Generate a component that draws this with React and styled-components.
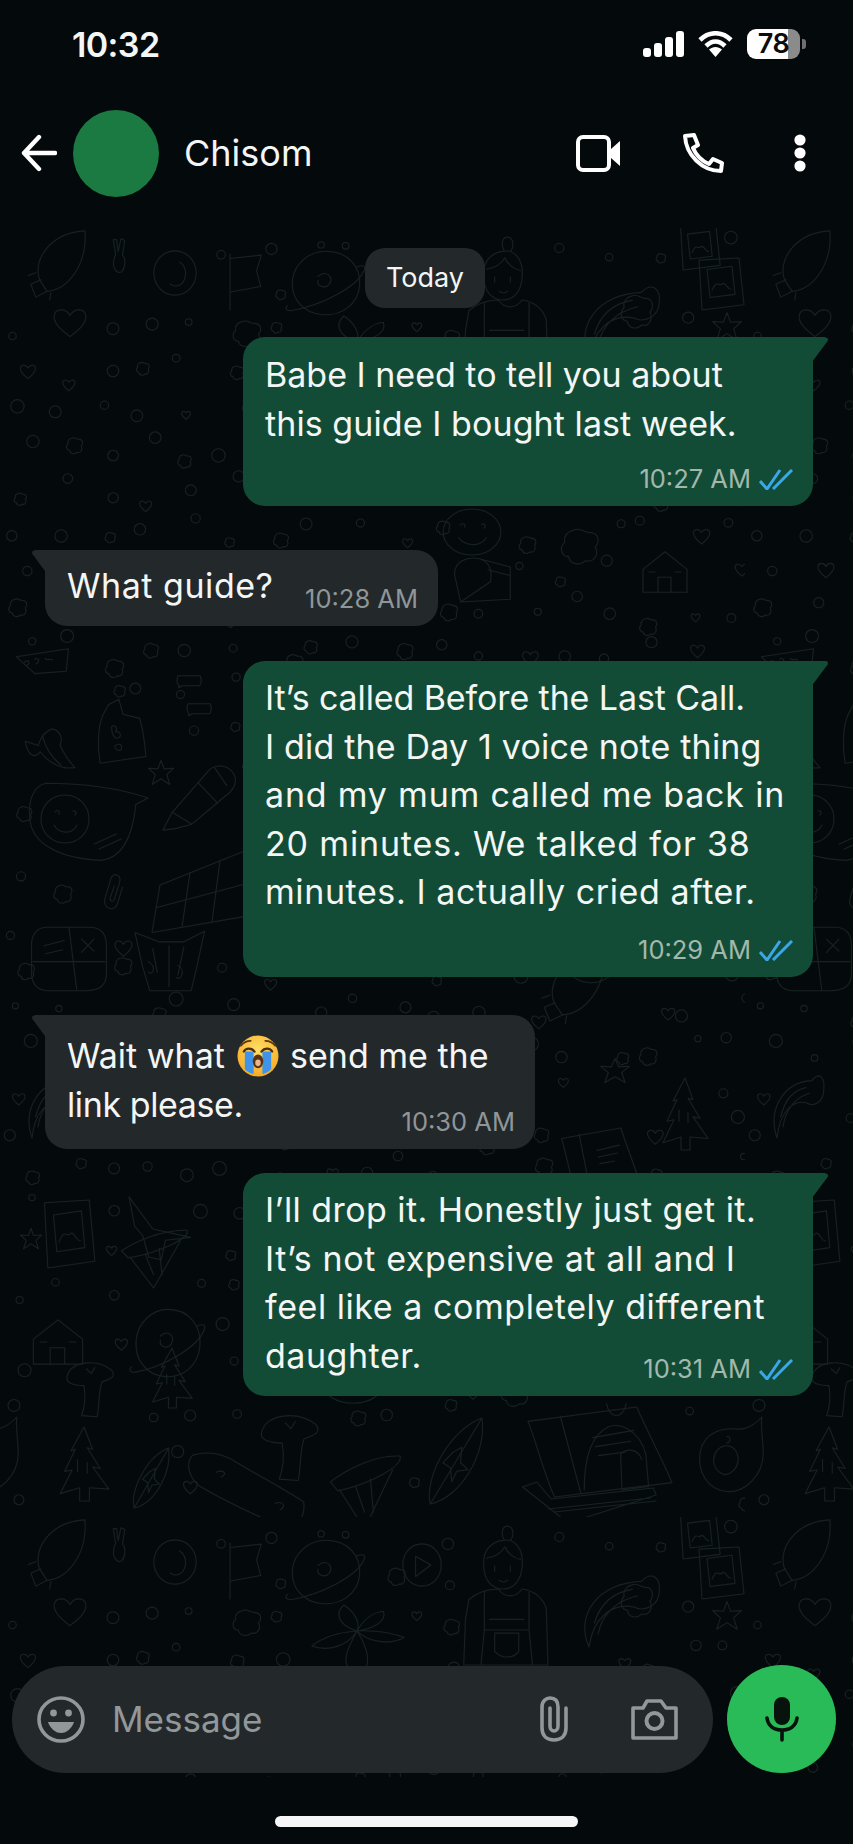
import React from "react";
import styled, { createGlobalStyle } from "styled-components";

const GlobalStyle = createGlobalStyle`
  html, body {
    margin: 0;
    padding: 0;
    background: #04090c;
    font-family: Inter, "Liberation Sans", sans-serif;
  }
`;

const Screen = styled.div`
  width: 853px;
  height: 1844px;
  display: flex;
  flex-direction: column;
  overflow: hidden;
  background: #04090c;
  color: #f4f6f5;
`;

const StatusBar = styled.div`
  height: 90px;
  flex: none;
  display: flex;
  align-items: center;
  justify-content: space-between;
  padding: 0 53px 2px 72px;
  box-sizing: border-box;
`;

const Clock = styled.div`
  font-size: 34px;
  font-weight: 600;
  letter-spacing: -0.6px;
`;

const StatusIcons = styled.div`
  display: flex;
  align-items: center;
  gap: 14px;
`;

const Battery = styled.div`
  position: relative;
  width: 53px;
  height: 30px;
  border-radius: 9px;
  background: linear-gradient(to right, #fff 77%, #8b8b8b 77%);
  color: #0a0c0e;
  font-size: 27px;
  font-weight: 600;
  line-height: 30px;
  text-align: center;
  letter-spacing: -0.5px;

  &::after {
    content: "";
    position: absolute;
    right: -6px;
    top: 10px;
    width: 4px;
    height: 10px;
    border-radius: 0 3px 3px 0;
    background: #6f6f6f;
  }
`;

const Header = styled.div`
  height: 138px;
  flex: none;
  display: flex;
  align-items: center;
  padding: 0 47px 12px 21px;
  box-sizing: border-box;
`;

const Avatar = styled.div`
  width: 86px;
  height: 87px;
  border-radius: 50%;
  background: #1b7a41;
  margin: 0 25px 0 16px;
`;

const Name = styled.div`
  flex: 1;
  font-size: 36px;
  font-weight: 400;
`;

const HeaderActions = styled.div`
  display: flex;
  align-items: center;
  gap: 61px;

  svg:last-child {
    margin-left: 9px;
  }
`;

const Chat = styled.div`
  position: relative;
  flex: 1;
  display: flex;
  flex-direction: column;
`;

const Wallpaper = styled.svg`
  position: absolute;
  inset: 0;
  width: 100%;
  height: 100%;

  path, circle, rect, ellipse {
    fill: none;
    stroke: #172120;
    stroke-width: 1.1;
    stroke-linecap: round;
    stroke-linejoin: round;
    vector-effect: non-scaling-stroke;
  }
`;

const Thread = styled.div`
  position: relative;
  display: flex;
  flex-direction: column;
  padding: 20px 40px 0 45px;
`;

const DayPill = styled.div`
  align-self: center;
  width: 120px;
  height: 60px;
  margin-left: -8px;
  border-radius: 20px;
  background: #23282b;
  font-size: 27px;
  line-height: 60px;
  text-align: center;
`;

const Bubble = styled.div`
  position: relative;
  box-sizing: border-box;
  width: ${(p) => p.$width}px;
  margin-top: ${(p) => p.$top}px;
  align-self: ${(p) => (p.$mine ? "flex-end" : "flex-start")};
  display: flex;
  flex-direction: ${(p) => (p.$inline ? "row" : "column")};
  justify-content: space-between;
  padding: ${(p) => p.$padTop}px 20px 12px 22px;
  background: ${(p) => (p.$mine ? "#134c36" : "#23282b")};
  border-radius: 22px;
  border-top-right-radius: ${(p) => (p.$mine ? 0 : 22)}px;
  border-top-left-radius: ${(p) => (p.$mine ? 22 : 0)}px;

  &::after {
    content: "";
    position: absolute;
    top: 0;
    ${(p) => (p.$mine ? "right: -15px;" : "left: -13px;")}
    width: 16px;
    height: 25px;
    background: inherit;
    clip-path: ${(p) =>
      p.$mine
        ? "polygon(0 0, 80% 0, 100% 6%, 98% 16%, 0 100%)"
        : "polygon(100% 0, 20% 0, 0 6%, 2% 16%, 100% 100%)"};
  }
`;

const BubbleText = styled.div`
  font-size: 34px;
  line-height: 48.5px;
  font-weight: 400;
  color: #f4f6f5;
  margin-bottom: ${(p) => (p.$inline ? 3 : 0)}px;
`;

const TextLine = styled.div`
  letter-spacing: ${(p) => p.$track || 0}px;
  white-space: nowrap;
`;

const Meta = styled.div`
  align-self: flex-end;
  flex: none;
  display: flex;
  align-items: center;
  gap: 8px;
  margin-top: ${(p) => p.$offset}px;
  font-size: 25.5px;
  line-height: 30px;
  color: ${(p) => (p.$mine ? "#a3b8ac" : "#8f9699")};
`;

const Composer = styled.div`
  position: relative;
  margin-top: auto;
  display: flex;
  align-items: center;
  gap: 14px;
  padding: 0 17px 4px 12px;
`;

const InputPill = styled.div`
  width: 701px;
  height: 107px;
  box-sizing: border-box;
  border-radius: 54px;
  background: #23282b;
  display: flex;
  align-items: center;
  padding: 0 35px 0 25px;
  color: #92979a;
`;

const Placeholder = styled.div`
  flex: 1;
  margin-left: 27px;
  font-size: 35px;
`;

const ClipSlot = styled.div`
  display: flex;
  margin-right: 62px;
`;

const MicButton = styled.div`
  width: 109px;
  height: 108px;
  border-radius: 50%;
  background: #29bb57;
  display: flex;
  align-items: center;
  justify-content: center;
`;

const HomeArea = styled.div`
  height: 67px;
  flex: none;
  display: flex;
  justify-content: center;
  padding-top: 39px;
  box-sizing: border-box;
`;

const HomeIndicator = styled.div`
  width: 303px;
  height: 11px;
  border-radius: 6px;
  background: #f7f7f7;
`;

const EmojiSlot = styled.svg`
  display: inline-block;
  width: 42px;
  height: 42px;
  margin: 0 2px;
  vertical-align: -9px;
`;

/* ---------- wallpaper doodles, each drawn in a 100x100 box ---------- */
const shapes = {
  rocket: "M20 72C8 42 40 6 92 4C96 52 64 86 32 88ZM22 72L6 78L14 96L32 88M14 62L2 66M38 90L36 100",
  smileBubble: "M16 4C50 4 80 12 100 22L90 30C88 60 82 94 62 98C30 96 4 80 3 45C2 24 6 8 16 4ZM56 78L74 66M60 84L78 72",
  toast: "M24 10L44 2L52 24L84 30C92 50 94 70 96 86L8 96C2 70 4 40 14 24ZM30 42C36 38 42 44 38 50C46 48 50 56 44 58C38 62 30 56 30 42ZM36 70C44 66 52 68 48 76C42 78 36 76 36 70Z",
  pen: "M4 92L16 68L62 14C70 2 90 2 98 18C102 30 94 40 86 46L42 84L20 90ZM16 68L42 84M50 28L76 56M72 8L88 32",
  star: "M50 2L62 34L98 32L72 56L84 94L50 72L16 94L28 56L2 32L38 34Z",
  grid: "M8 42L100 0L92 78L0 96ZM38 28L30 90M68 14L60 84M4 68L96 40",
  clip: "M78 38L62 82C54 100 20 92 26 68L44 16C50 0 74 6 70 24L54 68C50 76 40 74 42 64L54 34",
  tablet: "M22 2H76C92 2 98 14 98 30V72C98 88 90 98 72 98H24C10 98 2 88 2 72V28C2 12 10 2 22 2ZM50 2L60 98M4 54H96M18 30L44 22M20 42L42 36M66 20L82 38M82 20L66 40",
  shirt: "M4 10L36 24H70L98 8L88 60L80 98H24L14 60ZM28 34L34 70M50 30V92M70 32L62 74M22 54C34 62 28 76 22 70M62 60C72 64 68 84 60 78",
  banana: "M6 30L30 40C36 16 44 6 56 2C72 6 76 26 70 38C78 60 92 82 98 90C70 96 46 74 34 54C24 70 10 64 6 30ZM38 18C42 40 52 64 72 84",
  ticket: "M4 22L94 2L90 58L36 64ZM18 36C24 26 30 36 22 44M36 28C42 22 46 32 38 40M54 26C58 34 62 24 66 30",
  tree: "M50 0L66 30L56 28L80 56L66 54L96 84L60 82V100H42V82L6 90L28 58L14 60L34 30L26 32ZM38 44V60M56 48V62",
  leaf: "M92 0C100 40 60 92 10 100C0 70 40 14 92 0ZM10 100L92 0M46 40L60 34L58 52L70 60L52 62L44 74L42 58L30 52Z",
  mushroom: "M12 30C18 6 60 0 86 20C96 34 78 36 70 40C64 56 66 76 62 98L36 96C44 74 42 58 40 46C24 46 8 42 12 30ZM44 18L52 26L58 16",
  skate: "M4 4C18 -2 30 2 42 14C62 32 82 48 98 64C100 84 92 96 84 98C58 82 28 60 10 44C0 32 -2 14 4 4ZM24 26C30 22 34 28 28 32M74 66C80 62 84 70 78 74",
  drum: "M2 38C20 24 60 2 96 4C100 16 60 40 12 50ZM14 48L48 100L86 22M36 44L48 78M56 34L60 78",
  avocado: "M94 0C92 14 96 30 96 48C96 76 70 100 44 98C16 96 2 72 6 46C12 18 40 14 62 16C74 16 84 10 94 0ZM30 44C40 34 56 36 60 52C62 68 46 80 36 74C24 68 22 54 30 44ZM44 26C50 24 50 34 44 34",
  planet: "M50 2C78 2 94 26 92 54C90 82 70 100 46 98C20 96 6 72 8 46C10 22 28 2 50 2ZM88 26C96 22 100 24 98 30C90 56 44 84 6 92C0 92 -2 88 2 84M40 40C50 30 60 40 54 52C48 60 38 54 40 46",
  play: "M50 2C78 2 98 24 98 50S78 98 50 98S2 76 2 50S22 2 50 2ZM34 30L72 50L34 76Z",
  woman: "M50 24C74 20 94 36 92 62C90 88 72 100 50 100C28 100 8 88 8 62C6 40 24 26 50 24ZM52 22C44 12 50 0 62 2C74 4 74 18 66 24M14 52C32 50 46 44 54 34C60 44 74 52 88 54M32 64V72M66 64V72M42 86C48 90 54 90 60 86",
  overalls: "M8 14C20 2 32 0 42 0C50 12 62 12 70 0C82 2 94 10 98 26L100 100H2L4 40ZM26 4V54H78V4M26 54L22 100M78 54L82 100M32 40H72M38 58H66V82C60 92 46 92 38 82Z",
  book: "M2 16L76 0C84 30 94 60 100 84L20 100C12 70 8 40 2 16ZM24 10L38 96M46 34L74 26M48 44L72 38M50 54L68 50",
  person: "M38 4C42 22 62 22 66 4M6 100C6 70 14 40 40 30C60 24 86 36 94 60L98 96L60 100L58 60C70 52 84 56 88 66",
  laptop: "M4 28L14 18L24 52L96 30L98 44L36 100ZM22 72L94 50M26 78L98 56",
  flower: "M50 42C30 32 26 14 36 0C46 10 54 26 50 42ZM50 42C56 26 66 12 78 10C82 26 68 38 50 42ZM50 42C70 40 88 46 100 52C88 64 64 62 50 42ZM50 42C30 44 14 52 2 66C20 76 40 66 50 42ZM50 42C44 60 34 84 40 100M50 42C58 60 64 84 60 100",
  comet: "M20 100C4 60 30 20 78 18C90 4 100 14 98 30C98 50 80 56 70 50C44 44 24 66 20 100ZM30 84C34 60 50 42 74 36M26 70C32 48 46 32 68 28",
  tablet2: "M8 4L88 0L98 90L14 100ZM24 22L74 16L80 70L30 76ZM34 62C44 40 48 56 54 50C60 44 66 62 72 60",
  flag: "M6 0V100M6 8L98 2L84 30L96 58L8 68",
  astronaut: "M50 2C76 2 96 24 96 50S76 98 50 98S4 76 4 50S24 2 50 2ZM60 26C74 34 78 56 66 72C58 80 46 80 40 74",
  hand: "M32 42L22 4L36 4L42 34L54 2L70 6L60 44C74 48 74 72 58 84C38 92 18 76 24 56C26 48 28 44 32 42Z",
  mailbox: "M4 40C4 12 24 0 44 6L94 24V94L14 100L4 40ZM44 6C66 14 64 44 62 56L14 100M58 30L92 42",
  penguin: "M10 4L44 50L98 62L62 66L56 94L38 90L30 60L18 46Z",
  smile: "M50 2C78 2 98 24 98 50S78 98 50 98S2 76 2 50S22 2 50 2ZM28 62C38 80 64 82 74 62M30 36C34 30 40 34 38 40M66 34C72 32 74 38 70 42",
  house: "M6 44L50 4L94 44V96H6ZM36 96V62H62V96M18 50H30M70 50H82",
  heart: "M50 90C20 66 4 48 6 28C10 6 38 6 50 28C62 6 90 6 94 28C96 48 80 66 50 90Z",
  blob: "M34 6C50 -4 62 14 76 12C98 14 100 38 88 50C98 68 86 92 64 86C50 100 24 96 22 76C2 74 -2 50 12 38C8 22 20 8 34 6Z",
  bubble: "M8 12H92C100 30 98 74 90 84H24L10 98L12 84C2 70 2 30 8 12Z",
};

// x, y, w, h in wallpaper tile coordinates (the tile is 745 x 1289)
const placed = [
  ["rocket", 27, 0, 63, 72], ["hand", 108, 10, 24, 40], ["astronaut", 152, 22, 46, 46], ["flag", 228, 26, 34, 56],
  ["planet", 286, 22, 80, 66], ["play", 402, 26, 40, 44], ["woman", 480, 8, 46, 64], ["overalls", 462, 72, 86, 76],
  ["comet", 571, 50, 90, 80], ["tablet2", 677, -4, 44, 46], ["tablet2", 695, 30, 50, 52], ["flower", 310, 88, 94, 62],
  ["heart", 52, 78, 36, 34], ["star", 712, 84, 30, 30], ["blob", 232, 92, 30, 28], ["blob", 620, 66, 34, 36],
  ["smile", 442, 280, 60, 48], ["mailbox", 452, 328, 62, 46], ["house", 640, 322, 50, 44], ["blob", 560, 300, 40, 38],
  ["ticket", 14, 420, 58, 40], ["toast", 96, 470, 52, 68], ["banana", 22, 500, 54, 44], ["star", 148, 532, 26, 26],
  ["pen", 160, 534, 76, 74], ["smileBubble", 26, 552, 122, 82], ["smile", 40, 566, 50, 50], ["grid", 152, 620, 100, 88],
  ["clip", 96, 644, 34, 40], ["tablet", 30, 698, 78, 66], ["shirt", 132, 698, 74, 66], ["bubble", 176, 446, 26, 14],
  ["bubble", 186, 474, 26, 14], ["avocado", 560, 690, 66, 66], ["smile", 610, 470, 60, 50], ["mailbox", 620, 560, 70, 54],
  ["rocket", 540, 720, 70, 76], ["star", 600, 830, 30, 26], ["tree", 660, 850, 50, 72], ["book", 560, 900, 80, 66],
  ["heart", 570, 640, 30, 28], ["toast", 680, 640, 52, 60], ["pen", 620, 980, 70, 60], ["penguin", 122, 966, 70, 70],
  ["tablet2", 40, 972, 56, 68], ["house", 30, 1090, 56, 48], ["planet", 130, 1080, 76, 70], ["comet", 20, 840, 60, 70],
  ["drum", 120, 1000, 70, 60], ["star", 20, 1000, 22, 22], ["mushroom", 60, 1130, 60, 60], ["tree", 150, 1120, 44, 60],
  ["book", 525, 1179, 147, 90], ["person", 580, 1172, 70, 90], ["laptop", 517, 1245, 142, 50], ["leaf", 424, 1190, 63, 86],
  ["tree", 57, 1199, 54, 74], ["avocado", 696, 1189, 70, 76], ["avocado", -49, 1189, 70, 76], ["skate", 188, 1224, 118, 78],
  ["mushroom", 253, 1182, 73, 72], ["drum", 329, 1225, 74, 76], ["leaf", 130, 1220, 42, 60], ["smile", 322, 1136, 62, 40],
  ["blob", 500, 1150, 30, 30], ["heart", 460, 1148, 26, 26],
];

// small circles, hearts and blobs that fill the gaps, laid out by a seeded jitter
const filler = (() => {
  const items = [];
  let seed = 11;
  const rnd = () => {
    seed = (seed * 9301 + 49297) % 233280;
    return seed / 233280;
  };
  const kinds = ["circle", "circle", "blob", "circle", "circle", "heart", "circle", "blob"];
  for (let y = 8; y < 1280; y += 40) {
    for (let x = 8; x < 730; x += 42) {
      const px = x + rnd() * 26;
      const py = y + rnd() * 24;
      const kind = kinds[Math.floor(rnd() * kinds.length)];
      const size = kind === "circle" ? 6 + rnd() * 8 : 10 + rnd() * 10;
      const hidden = placed.some(([, bx, by, bw, bh]) => px > bx - 4 && px < bx + bw + 4 && py > by - 4 && py < by + bh + 4);
      if (!hidden) items.push({ kind, x: px, y: py, size });
    }
  }
  return items;
})();

const WallpaperLayer = () => (
  <Wallpaper aria-hidden="true">
    <defs>
      <pattern id="doodles" patternUnits="userSpaceOnUse" width="745" height="1289">
        {placed.map(([kind, x, y, w, h], i) => (
          <path key={i} d={shapes[kind]} transform={`translate(${x} ${y}) scale(${w / 100} ${h / 100})`} />
        ))}
        {filler.map((f, i) =>
          f.kind === "circle" ? (
            <circle key={i} cx={f.x} cy={f.y} r={f.size / 2} />
          ) : (
            <path key={i} d={shapes[f.kind]} transform={`translate(${f.x} ${f.y}) scale(${f.size / 100})`} />
          )
        )}
      </pattern>
    </defs>
    <rect width="853" height="1549" style={{ fill: "url(#doodles)", stroke: "none" }} />
  </Wallpaper>
);

/* ---------- icons ---------- */
const SignalIcon = () => (
  <svg width="41" height="26" viewBox="0 0 41 26" fill="#fff">
    <rect x="0" y="17" width="8" height="9" rx="3" />
    <rect x="11" y="12" width="8" height="14" rx="3" />
    <rect x="22" y="6" width="8" height="20" rx="3" />
    <rect x="33" y="0" width="8" height="26" rx="3" />
  </svg>
);

const WifiIcon = () => (
  <svg width="35" height="26" viewBox="0 0 35 26" fill="none" stroke="#fff" strokeWidth="4.6">
    <path d="M2 9C11 0 24 0 33 9" />
    <path d="M8 15C14 9 21 9 27 15" />
    <path d="M17.5 26L11 18.5C15 15 20 15 24 18.5Z" fill="#fff" stroke="none" />
  </svg>
);

const BackIcon = () => (
  <svg width="36" height="38" viewBox="0 0 36 38" fill="none" stroke="#fff" strokeWidth="4.4" strokeLinecap="round" strokeLinejoin="round">
    <path d="M18 3L3 19L18 35M3 19H34" />
  </svg>
);

const VideoIcon = () => (
  <svg width="45" height="37" viewBox="0 0 45 37">
    <rect x="2" y="2" width="31" height="33" rx="5" fill="none" stroke="#fff" strokeWidth="4" />
    <path d="M35 14L44 6V31L35 23Z" fill="#fff" />
  </svg>
);

const PhoneIcon = () => (
  <svg width="42" height="40" viewBox="0 0 42 40" fill="none" stroke="#fff" strokeWidth="4" strokeLinejoin="round">
    <path d="M3 3L12 2L16 12L11 15C14 22 20 28 27 31L31 26L40 30L39 38C20 38 4 22 3 3Z" />
  </svg>
);

const DotsIcon = () => (
  <svg width="12" height="38" viewBox="0 0 12 38" fill="#fff">
    <circle cx="6" cy="6" r="5.6" />
    <circle cx="6" cy="19" r="5.6" />
    <circle cx="6" cy="32" r="5.6" />
  </svg>
);

const TicksIcon = () => (
  <svg width="34" height="21" viewBox="0 0 34 21" fill="none" stroke="#3aa7e8" strokeWidth="3">
    <path d="M1 12L8 20L21 1" />
    <path d="M14 20L33 1" />
  </svg>
);

const SmileIcon = () => (
  <svg width="48" height="47" viewBox="0 0 48 47" fill="none" stroke="#92979a" strokeWidth="3.6">
    <ellipse cx="24" cy="23.5" rx="22" ry="21.5" />
    <circle cx="16.5" cy="17" r="3.4" fill="#92979a" stroke="none" />
    <circle cx="31.5" cy="17" r="3.4" fill="#92979a" stroke="none" />
    <path d="M11 26H37C35 32 30 37 24 37C18 37 13 32 11 26Z" fill="#92979a" stroke="none" />
  </svg>
);

const ClipIcon = () => (
  <svg width="30" height="46" viewBox="0 0 30 46" fill="none" stroke="#92979a" strokeWidth="3.6" strokeLinecap="round">
    <path d="M27 12V32C27 40 22 44 15 44C8 44 3 40 3 32V11C3 5 7 2 11 2C16 2 19 5 19 11V30C19 33 17 35 15 35C13 35 11 33 11 30V12" />
  </svg>
);

const CameraIcon = () => (
  <svg width="47" height="42" viewBox="0 0 47 42" fill="none" stroke="#92979a" strokeWidth="3.6" strokeLinejoin="round">
    <path d="M2 10H12L16 3H30L35 10H45V40H2Z" />
    <circle cx="23.5" cy="23" r="8" strokeWidth="4" />
  </svg>
);

const MicIcon = () => (
  <svg width="34" height="46" viewBox="0 0 34 46" fill="none" stroke="#07130c" strokeWidth="3.6" strokeLinecap="round">
    <rect x="9" y="1" width="16" height="28" rx="8" fill="#07130c" stroke="none" />
    <path d="M2 22C3 30 9 34 17 34C25 34 31 30 32 22M17 34V44" />
  </svg>
);

const CryingEmoji = () => (
  <EmojiSlot viewBox="0 0 43 43">
    <defs>
      <radialGradient id="cryFace" cx="50%" cy="35%" r="65%">
        <stop offset="0%" stopColor="#ffdf66" />
        <stop offset="100%" stopColor="#f6ab25" />
      </radialGradient>
    </defs>
    <circle cx="21.5" cy="21.5" r="21" fill="url(#cryFace)" />
    <path d="M4 11C7 7 11 6 14 6M39 11C36 7 32 6 29 6" fill="none" stroke="#5a3612" strokeWidth="1.8" strokeLinecap="round" />
    <path d="M8 17H17V40C13 39 10 37 8 35ZM26 17H35V35C33 37 30 39 26 40Z" fill="#3f94ea" />
    <path d="M7 17C9 13 15 13 18 17M25 17C28 13 34 13 36 17" fill="none" stroke="#4a2c10" strokeWidth="2.2" strokeLinecap="round" />
    <ellipse cx="21.5" cy="27" rx="5.4" ry="7" fill="#5a3210" />
    <ellipse cx="21.5" cy="28.5" rx="2.8" ry="3.4" fill="#e9b58c" />
  </EmojiSlot>
);

const messages = [
  {
    mine: true, width: 570, top: 29, padTop: 14, offset: 16, time: "10:27 AM",
    lines: [["Babe I need to tell you about", 0], ["this guide I bought last week.", 0.08]],
  },
  {
    mine: false, width: 393, top: 44, padTop: 12, inline: true, offset: 0, time: "10:28 AM",
    lines: [["What guide?", 0.54]],
  },
  {
    mine: true, width: 570, top: 35, padTop: 13.5, offset: 18.5, time: "10:29 AM",
    lines: [
      ["It’s called Before the Last Call.", -0.11],
      ["I did the Day 1 voice note thing", 0.18],
      ["and my mum called me back in", 0.8],
      ["20 minutes. We talked for 38", 0.84],
      ["minutes. I actually cried after.", 0.59],
    ],
  },
  {
    mine: false, width: 490, top: 38, padTop: 17, offset: -22, time: "10:30 AM",
    lines: [
      [<React.Fragment key="a">Wait what <CryingEmoji /> send me the</React.Fragment>, 0],
      ["link please.", -0.39],
    ],
  },
  {
    mine: true, width: 570, top: 24, padTop: 13, offset: -26, time: "10:31 AM",
    lines: [
      ["I’ll drop it. Honestly just get it.", 0.44],
      ["It’s not expensive at all and I", 0.61],
      ["feel like a completely different", 0.55],
      ["daughter.", 0.52],
    ],
  },
];

export default function App() {
  return (
    <Screen>
      <GlobalStyle />
      <StatusBar>
        <Clock>10:32</Clock>
        <StatusIcons>
          <SignalIcon />
          <WifiIcon />
          <Battery>78</Battery>
        </StatusIcons>
      </StatusBar>
      <Header>
        <BackIcon />
        <Avatar />
        <Name>Chisom</Name>
        <HeaderActions>
          <VideoIcon />
          <PhoneIcon />
          <DotsIcon />
        </HeaderActions>
      </Header>
      <Chat>
        <WallpaperLayer />
        <Thread>
          <DayPill>Today</DayPill>
          {messages.map((m) => (
            <Bubble key={m.time} $mine={m.mine} $width={m.width} $top={m.top} $padTop={m.padTop} $inline={m.inline}>
              <BubbleText $inline={m.inline}>
                {m.lines.map(([line, track], i) => (
                  <TextLine key={i} $track={track}>{line}</TextLine>
                ))}
              </BubbleText>
              <Meta $mine={m.mine} $offset={m.offset}>
                {m.time}
                {m.mine && <TicksIcon />}
              </Meta>
            </Bubble>
          ))}
        </Thread>
        <Composer>
          <InputPill>
            <SmileIcon />
            <Placeholder>Message</Placeholder>
            <ClipSlot>
              <ClipIcon />
            </ClipSlot>
            <CameraIcon />
          </InputPill>
          <MicButton>
            <MicIcon />
          </MicButton>
        </Composer>
      </Chat>
      <HomeArea>
        <HomeIndicator />
      </HomeArea>
    </Screen>
  );
}
